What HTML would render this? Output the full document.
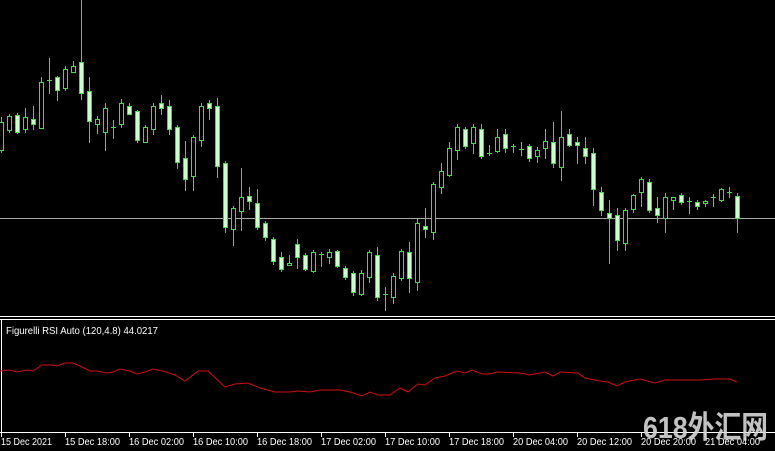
<!DOCTYPE html>
<html><head><meta charset="utf-8"><style>
html,body{margin:0;padding:0;background:#000;width:775px;height:451px;overflow:hidden}
svg{display:block}
.ax{font-family:"Liberation Sans",sans-serif;font-size:10.5px;fill:#fff}
</style></head><body>
<svg width="775" height="451" viewBox="0 0 775 451" xmlns="http://www.w3.org/2000/svg" shape-rendering="crispEdges">
<rect width="775" height="451" fill="#000"/>
<line x1="0" y1="218.5" x2="775" y2="218.5" stroke="#a8a8a8"/>
<g id="c" stroke="#44dd44" stroke-width="1"></g>
<line x1="0" y1="316.5" x2="775" y2="316.5" stroke="#fff"/>
<line x1="0" y1="319.5" x2="775" y2="319.5" stroke="#fff"/>
<line x1="1.5" y1="319" x2="1.5" y2="432" stroke="#fff"/>
<line x1="0" y1="432.5" x2="775" y2="432.5" stroke="#fff"/>
<text x="6" y="334" class="ax" style="font-size:10px" textLength="152" lengthAdjust="spacingAndGlyphs">Figurelli RSI Auto (120,4.8) 44.0217</text>
<polyline shape-rendering="auto" fill="none" stroke="#d01010" stroke-width="1" points="0,371 10,370 17,372 27,370 33,371 42,365 52,365 57,366 65,363 73,363 80,366 90,371 97,371 107,373 113,372 120,369 130,371 137,374 145,372 153,369 163,371 175,375 185,381 198,371 208,371 225,387 235,384 248,383 260,388 275,392 290,392 298,391 310,392 320,390 340,390 350,392 362,396 370,392 378,395 390,395 400,388 408,392 418,384 425,385 435,378 445,376 457,371 465,373 472,370 482,374 490,374 497,372 520,373 530,375 545,372 553,376 560,372 578,373 585,378 600,381 608,382 617,386 625,382 640,379 655,383 665,380 700,380 715,379 730,379 737,382"/>
<g stroke="#fff">
<line x1="1.5" y1="432" x2="1.5" y2="437"/><line x1="65.5" y1="432" x2="65.5" y2="437"/><line x1="129.5" y1="432" x2="129.5" y2="437"/><line x1="193.5" y1="432" x2="193.5" y2="437"/><line x1="257.5" y1="432" x2="257.5" y2="437"/><line x1="321.5" y1="432" x2="321.5" y2="437"/><line x1="385.5" y1="432" x2="385.5" y2="437"/><line x1="449.5" y1="432" x2="449.5" y2="437"/><line x1="513.5" y1="432" x2="513.5" y2="437"/><line x1="577.5" y1="432" x2="577.5" y2="437"/><line x1="641.5" y1="432" x2="641.5" y2="437"/><line x1="705.5" y1="432" x2="705.5" y2="437"/>
</g>
<g class="ax">
<text x="1" y="445" textLength="51" lengthAdjust="spacingAndGlyphs">15 Dec 2021</text><text x="65" y="445" textLength="55" lengthAdjust="spacingAndGlyphs">15 Dec 18:00</text><text x="129" y="445" textLength="55" lengthAdjust="spacingAndGlyphs">16 Dec 02:00</text><text x="193" y="445" textLength="55" lengthAdjust="spacingAndGlyphs">16 Dec 10:00</text><text x="257" y="445" textLength="55" lengthAdjust="spacingAndGlyphs">16 Dec 18:00</text><text x="321" y="445" textLength="55" lengthAdjust="spacingAndGlyphs">17 Dec 02:00</text><text x="385" y="445" textLength="55" lengthAdjust="spacingAndGlyphs">17 Dec 10:00</text><text x="449" y="445" textLength="55" lengthAdjust="spacingAndGlyphs">17 Dec 18:00</text><text x="513" y="445" textLength="55" lengthAdjust="spacingAndGlyphs">20 Dec 04:00</text><text x="577" y="445" textLength="55" lengthAdjust="spacingAndGlyphs">20 Dec 12:00</text><text x="641" y="445" textLength="55" lengthAdjust="spacingAndGlyphs">20 Dec 20:00</text><text x="705" y="445" textLength="55" lengthAdjust="spacingAndGlyphs">21 Dec 04:00</text>
</g>
<text x="643" y="438" style="font-family:'Liberation Sans','Noto Sans CJK SC',sans-serif;font-size:31px;font-weight:bold;fill:#d8d8d8;opacity:0.9" textLength="125" lengthAdjust="spacingAndGlyphs">618外汇网</text>
</svg>
<script>
var d=[[1,117,122,150,152,'b'],[9,114,116,130,132,'b'],[17,113,115,132,133,'f'],[25,108,117,129,132,'b'],[33,106,119,124,129,'f'],[41,77,82,128,128,'b'],[49,58,80,80,93,'c'],[57,76,77,90,100,'f'],[65,66,69,88,90,'b'],[73,61,66,72,72,'b'],[81,0,62,93,99,'f'],[89,77,91,121,142,'f'],[97,116,119,124,133,'b'],[105,103,108,132,150,'b'],[113,120,127,127,138,'c'],[121,99,103,124,127,'b'],[129,103,106,114,114,'f'],[137,110,111,140,142,'f'],[145,125,127,142,142,'b'],[153,103,106,129,134,'b'],[161,95,103,108,114,'f'],[169,100,106,129,134,'f'],[177,125,127,162,168,'f'],[185,141,158,179,190,'f'],[193,135,137,176,190,'b'],[201,103,106,140,146,'b'],[209,100,103,108,119,'f'],[217,98,106,166,177,'f'],[225,161,163,227,232,'f'],[233,206,208,229,245,'b'],[241,168,197,211,230,'b'],[249,187,196,201,209,'f'],[257,189,203,227,229,'f'],[265,221,223,237,240,'f'],[273,237,239,261,264,'f'],[281,252,257,269,271,'f'],[289,255,263,265,265,'b'],[297,239,244,257,268,'f'],[305,253,255,269,270,'f'],[313,250,252,271,272,'b'],[321,252,254,254,266,'c'],[329,249,252,257,263,'b'],[337,250,251,266,267,'f'],[345,266,268,277,279,'f'],[353,271,273,292,295,'f'],[361,270,273,294,295,'b'],[369,250,252,277,282,'b'],[377,247,255,297,300,'f'],[385,287,294,294,310,'c'],[393,273,276,297,303,'b'],[401,249,251,278,280,'b'],[409,242,252,278,292,'f'],[417,219,223,282,290,'b'],[425,208,226,229,237,'f'],[433,182,184,232,239,'b'],[441,163,171,187,193,'b'],[449,142,148,175,176,'b'],[457,124,127,150,159,'b'],[465,127,129,146,148,'f'],[473,124,127,143,153,'b'],[481,124,129,156,158,'f'],[489,145,153,153,155,'c'],[497,129,137,151,152,'b'],[505,129,134,148,152,'f'],[513,144,146,146,152,'c'],[521,142,149,149,155,'c'],[529,144,146,158,161,'f'],[537,147,150,156,162,'b'],[545,129,141,148,158,'b'],[553,122,142,163,167,'f'],[561,111,137,167,180,'b'],[569,129,134,145,146,'f'],[577,137,142,145,163,'f'],[585,137,148,156,163,'f'],[593,148,153,189,205,'f'],[601,187,192,210,215,'f'],[609,200,213,218,263,'f'],[617,208,215,240,250,'f'],[625,208,210,243,250,'b'],[633,194,195,209,212,'b'],[641,177,179,192,206,'b'],[649,179,182,210,212,'f'],[657,197,208,215,222,'f'],[665,193,197,218,232,'b'],[673,197,197,200,209,'b'],[681,193,195,202,204,'f'],[689,197,201,201,213,'c'],[697,200,202,206,209,'f'],[705,200,201,202,206,'b'],[713,194,197,197,206,'c'],[721,188,189,200,201,'b'],[729,187,192,192,197,'c'],[737,193,196,218,232,'f']];
var g=document.getElementById('c'),s='';
d.forEach(function(c){var x=c[0],w=x+0.5;
s+='<line x1="'+w+'" y1="'+c[1]+'" x2="'+w+'" y2="'+(c[4]+1)+'"/>';
if(c[5]=='c'){s+='<line x1="'+(x-2)+'" y1="'+(c[2]+0.5)+'" x2="'+(x+3)+'" y2="'+(c[2]+0.5)+'"/>';}
else{var h=Math.max(c[3]-c[2],2);s+='<rect x="'+(x-1.5)+'" y="'+(c[2]+0.5)+'" width="4" height="'+h+'" fill="'+(c[5]=='f'?'#ccffcc':'#000')+'"/>';}
});
g.innerHTML=s;
</script>
</body></html>
